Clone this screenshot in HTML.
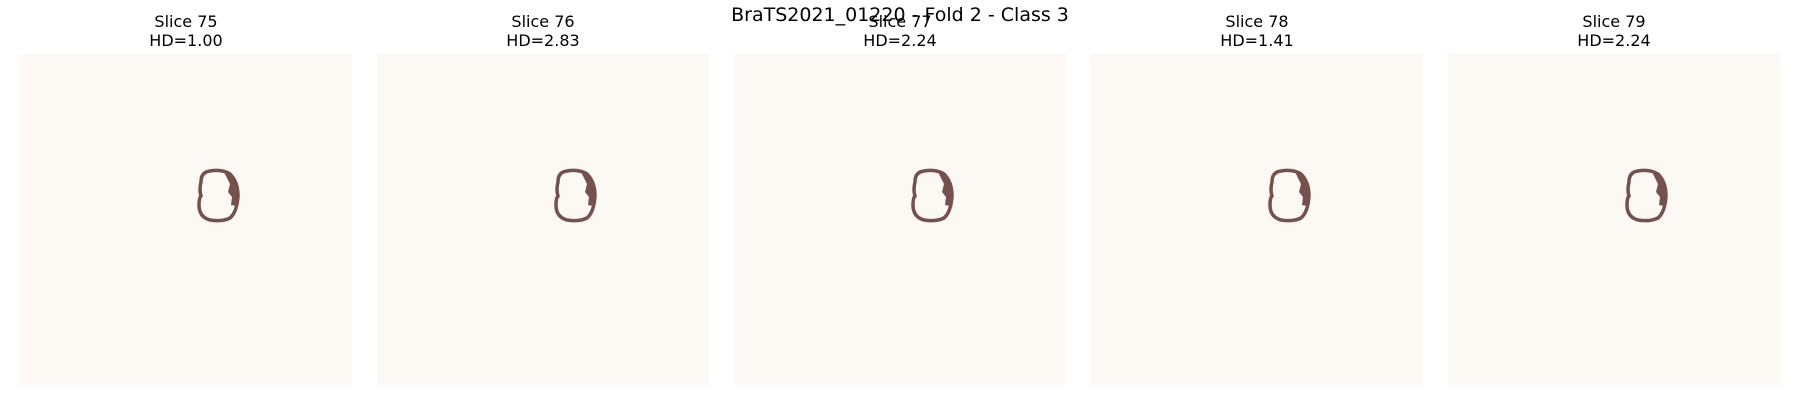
<!DOCTYPE html>
<html><head><style>
body{margin:0;width:1800px;height:400px;background:#fff;position:relative;overflow:hidden;font-family:"DejaVu Sans","Liberation Sans",sans-serif;}
.p{position:absolute;top:54px;width:332px;height:331px;background:#fcf8f4;}
.t{position:absolute;top:12px;width:332px;text-align:center;font-size:16px;line-height:19px;color:#000;}
.s{position:absolute;top:4px;left:0;width:1800px;text-align:center;font-size:19px;color:#000;}
svg{position:absolute;left:0;top:0}
</style></head><body>
<div class="t" style="left:20px">Slice 75<br>HD=1.00</div>
<div class="t" style="left:377px">Slice 76<br>HD=2.83</div>
<div class="t" style="left:734px">Slice 77<br>HD=2.24</div>
<div class="t" style="left:1091px">Slice 78<br>HD=1.41</div>
<div class="t" style="left:1448px">Slice 79<br>HD=2.24</div>
<div class="p" style="left:20px"></div>
<div class="p" style="left:377px"></div>
<div class="p" style="left:734px"></div>
<div class="p" style="left:1091px"></div>
<div class="p" style="left:1448px"></div>
<div class="s">BraTS2021_01220 - Fold 2 - Class 3</div>
<svg width="1800" height="400">
<defs><g id="r">
<path d="M201 182 Q201 172 210 171 Q222 169 230 174 Q238 182 238 196 Q237 212 230 218 Q222 222 210 220 Q199 217 199 205 Q199 198 201 196 Q199 190 201 182 Z" fill="none" stroke="#74514d" stroke-width="3.5"/>
<path d="M224 172 Q234 175 238 184 Q240 196 236 206 L231 205 L232 197 L228 192 L230 184 Z" fill="#74514d"/>
</g></defs>
<use href="#r"/>
<use href="#r" x="357"/>
<use href="#r" x="714"/>
<use href="#r" x="1071"/>
<use href="#r" x="1428"/>
</svg>
</body></html>
